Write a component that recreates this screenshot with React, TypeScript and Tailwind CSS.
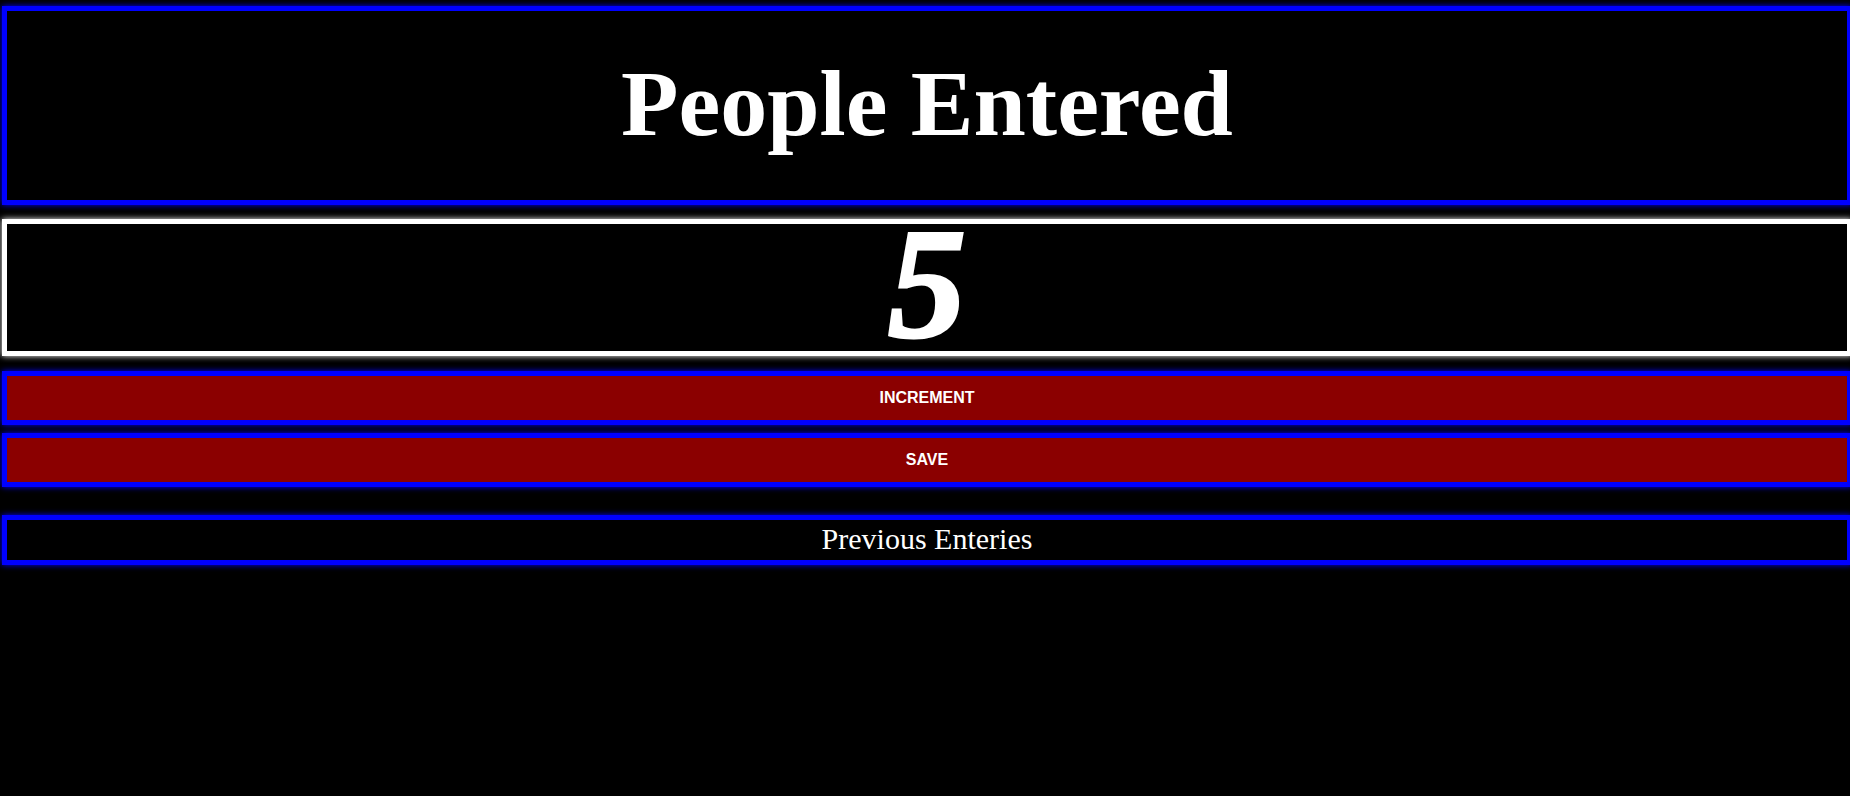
export default function App() {
    return (
        <div className="min-h-[796px] w-full overflow-hidden bg-black">
            <div className="flex flex-col pt-[6px]">
                <div className="ml-[2px] h-[199px] w-full shrink-0 border-[5px] border-[#0000ff] shadow-[0_0_6px_#0000ff]">
                    <h1 className="text-center font-['Liberation_Serif',serif] text-[94px] font-bold leading-[185px] text-white">
                        People Entered
                    </h1>
                </div>
                <div className="ml-[2px] mt-[14px] h-[137px] w-full shrink-0 border-[5px] border-white shadow-[0_0_6px_#ffffff]">
                    <p className="text-center font-['Liberation_Serif',serif] text-[156px] font-bold italic leading-[119px] text-white [-webkit-text-stroke:3px_white]">
                        5
                    </p>
                </div>
                <button className="ml-[2px] mt-[15px] h-[54px] w-full shrink-0 border-[5px] border-[#0000ff] bg-[#8b0000] font-['Liberation_Sans',Arial,sans-serif] text-[16px] font-bold text-white shadow-[0_0_6px_#0000ff]">
                    INCREMENT
                </button>
                <button className="ml-[2px] mt-[8px] h-[54px] w-full shrink-0 border-[5px] border-[#0000ff] bg-[#8b0000] font-['Liberation_Sans',Arial,sans-serif] text-[16px] font-bold text-white shadow-[0_0_6px_#0000ff]">
                    SAVE
                </button>
                <div className="ml-[2px] mt-[28px] h-[50px] w-full shrink-0 border-[5px] border-[#0000ff] shadow-[0_0_6px_#0000ff]">
                    <h3 className="text-center font-['Liberation_Serif',serif] text-[30px] leading-[38px] text-white">
                        Previous Enteries
                    </h3>
                </div>
            </div>
        </div>
    )
}
